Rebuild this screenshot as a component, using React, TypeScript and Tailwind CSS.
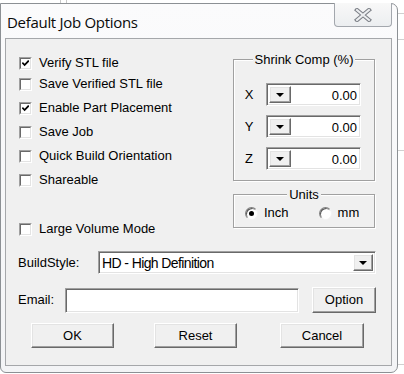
import React from "react";

type Row = { label: string; checked: boolean; gap: string };

const ROWS: Row[] = [
  { label: "Verify STL file", checked: true, gap: "mt-0" },
  { label: "Save Verified STL file", checked: false, gap: "mt-[5px]" },
  { label: "Enable Part Placement", checked: true, gap: "mt-[8px]" },
  { label: "Save Job", checked: false, gap: "mt-[8px]" },
  { label: "Quick Build Orientation", checked: false, gap: "mt-[8px]" },
  { label: "Shareable", checked: false, gap: "mt-[8px]" },
  { label: "Large Volume Mode", checked: false, gap: "mt-[33px]" },
];

function CheckBox({ checked }: { checked: boolean }) {
  return (
    <span className="w-[13px] h-[13px] border border-t-[#a0a0a0] border-l-[#a0a0a0] border-b-white border-r-white flex">
      <span className="flex-1 border border-t-[#696969] border-l-[#696969] border-b-[#e3e3e3] border-r-[#e3e3e3] bg-white flex items-center justify-center">
        {checked && (
          <svg width="7" height="7" viewBox="0 0 7 7">
            <path d="M0.3 2.6 L2.6 5 L6.8 0.6" stroke="#000" strokeWidth="1.8" fill="none" />
          </svg>
        )}
      </span>
    </span>
  );
}

function Radio({ on }: { on: boolean }) {
  return (
    <span className="w-[13px] h-[13px] rounded-full border border-t-[#808080] border-l-[#808080] border-b-[#f4f4f4] border-r-[#f4f4f4] bg-white shadow-[inset_1px_1px_0_#5a5a5a] flex items-center justify-center">
      {on && <span className="w-[5px] h-[5px] rounded-full bg-black" />}
    </span>
  );
}

function DownArrow() {
  return (
    <svg width="8" height="4" viewBox="0 0 8 4">
      <path d="M0 0 H8 L4 4 Z" fill="#000" />
    </svg>
  );
}

const raised =
  "border border-t-white border-l-white border-b-[#696969] border-r-[#696969] bg-[#f0f0f0] shadow-[inset_-1px_-1px_0_#a0a0a0,inset_1px_1px_0_#e3e3e3]";
const sunken =
  "border border-t-[#a0a0a0] border-l-[#a0a0a0] border-b-white border-r-white bg-white shadow-[inset_1px_1px_0_#696969,inset_-1px_-1px_0_#e3e3e3]";

function Spinner({ label }: { label: string }) {
  return (
    <div className="h-[23px] flex items-center">
      <span className="w-[16px] text-center ml-[7px]">{label}</span>
      <div className={`ml-[9px] w-[95px] h-[23px] flex p-[2px] ${sunken}`}>
        <div className={`w-[22px] h-full flex items-center justify-center ${raised}`}>
          <DownArrow />
        </div>
        <div className="flex-1 text-right pr-[1px] leading-[19px]">0.00</div>
      </div>
    </div>
  );
}

function Button({ label, w }: { label: string; w: string }) {
  return (
    <div className={`${w} h-[25px] flex items-center justify-center ${raised}`}>{label}</div>
  );
}

export default function App() {
  return (
    <div className="w-[404px] h-[374px] overflow-hidden bg-white relative text-[13px] text-black font-['Liberation_Sans',Arial,sans-serif]">
      {/* window behind, peeking out */}
      <div className="absolute left-[60px] top-0 w-[7px] h-[3px] border-x border-[#c8c8c8]" />
      <div className="absolute left-[398px] top-[13px] w-[6px] h-[27px] border-y border-[#d0d0d0]" />
      <div className="absolute left-[398px] top-[150px] w-[6px] h-[215px] border-y border-[#d0d0d0]" />

      <div className="pt-[3px]">
        <div className="w-[398px] h-[370px] border border-[#8c9094] rounded-r-[7px] rounded-bl-[6px] bg-gradient-to-b from-[#fbfbfc] to-[#f3f4f6] flex flex-col">
          <div className="h-[34px] flex items-start">
            <div className="pl-[6px] pt-[9px] text-[15px] leading-[18px] text-[#0a0a0a] font-['Open_Sans','Noto_Sans',sans-serif] tracking-[-0.3px]">
              Default Job Options
            </div>
            <div className="ml-auto mr-[5px] -mt-[1px] w-[58px] h-[24px] border border-t-0 border-[#a3a7ad] rounded-b-[4px] bg-gradient-to-b from-[#f8f8f8] to-[#eceef0] flex items-center justify-center">
              <svg width="18" height="14" viewBox="0 0 18 14">
                <path d="M3 2 L15 12 M15 2 L3 12" stroke="#7b7f86" strokeWidth="4.2" strokeLinecap="square" />
                <path d="M3 2 L15 12 M15 2 L3 12" stroke="#eceef0" strokeWidth="2" strokeLinecap="square" />
              </svg>
            </div>
          </div>

          <div className="ml-[4px] mr-[5px] h-[328px] border border-[#a5a7aa] bg-[#f0f0f0] flex flex-col">
            <div className="flex pl-[13px] h-[197px]">
              <div className="w-[214px] pt-[16px] flex flex-col">
                {ROWS.map((r) => (
                  <div key={r.label} className={`${r.gap} h-[16px] flex items-center`}>
                    <CheckBox checked={r.checked} />
                    <span className="ml-[7px]">{r.label}</span>
                  </div>
                ))}
              </div>

              <div className="w-[142px] pt-[13px] flex flex-col">
                <fieldset className="border border-[#a0a0a0] shadow-[inset_1px_1px_0_#fff,1px_1px_0_#fff] pb-[10px]">
                  <legend className="mx-auto px-[2px] leading-[15px] bg-[#f0f0f0]">Shrink Comp (%)</legend>
                  <div className="pt-[16px] flex flex-col gap-[9px]">
                    <Spinner label="X" />
                    <Spinner label="Y" />
                    <Spinner label="Z" />
                  </div>
                </fieldset>

                <fieldset className="mt-[6px] border border-[#a0a0a0] shadow-[inset_1px_1px_0_#fff,1px_1px_0_#fff] pb-[7px]">
                  <legend className="mx-auto px-[2px] leading-[15px] bg-[#f0f0f0]">Units</legend>
                  <div className="pt-[4px] pl-[11px] h-[18px] flex items-center">
                    <Radio on={true} />
                    <span className="ml-[6px]">Inch</span>
                    <span className="ml-[30px]">
                      <Radio on={false} />
                    </span>
                    <span className="ml-[6px]">mm</span>
                  </div>
                </fieldset>
              </div>
            </div>

            <div className="mt-[15px] pl-[12px] h-[23px] flex items-center">
              <span className="w-[80px]">BuildStyle:</span>
              <div className={`w-[278px] h-[23px] flex p-[2px] ${sunken}`}>
                <div className="flex-1 pl-[1px] leading-[19px] text-[14px] tracking-[-0.6px]">HD - High Definition</div>
                <div className={`w-[20px] h-full flex items-center justify-center ${raised}`}>
                  <DownArrow />
                </div>
              </div>
            </div>

            <div className="mt-[13px] pl-[12px] h-[26px] flex items-center">
              <span className="w-[47px]">Email:</span>
              <div className={`w-[234px] h-[25px] ${sunken}`} />
              <div className={`ml-[13px] w-[64px] h-[26px] flex items-center justify-center ${raised}`}>Option</div>
            </div>

            <div className="mt-[10px] pl-[25px] flex">
              <Button label="OK" w="w-[83px]" />
              <div className="ml-[40px]">
                <Button label="Reset" w="w-[83px]" />
              </div>
              <div className="ml-[43px]">
                <Button label="Cancel" w="w-[84px]" />
              </div>
            </div>
          </div>
        </div>
      </div>
    </div>
  );
}
